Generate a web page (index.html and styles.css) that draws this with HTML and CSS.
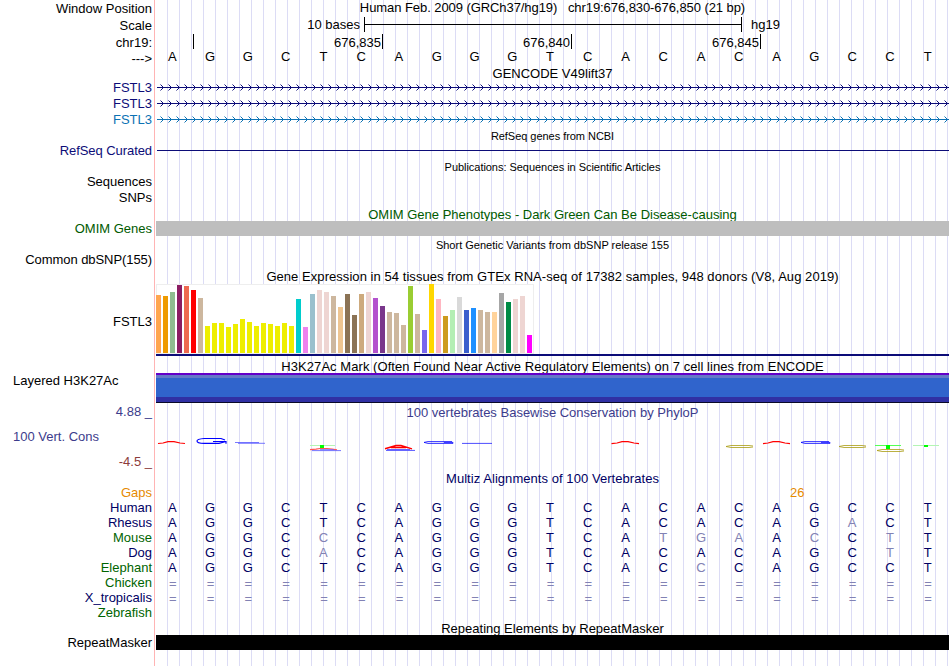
FILE: index.html
```
<!DOCTYPE html>
<html>

<head>
    <meta charset="utf-8" />
    <title>chr19:676,830-676,850</title>
    <link rel="stylesheet" href="styles.css">
</head>

<body>
    <div class="tracks">
        <div class="row header">
            <div class="label low">Window Position</div>
            <div class="data title tight">Human Feb. 2009 (GRCh37/hg19) &nbsp; chr19:676,830-676,850 (21 bp)</div>
        </div>
        <div class="row scale">
            <div class="label low">Scale</div>
            <div class="data">
                <span class="scale-text">10 bases</span>
                <span class="scale-bar"></span>
                <span>hg19</span>
            </div>
        </div>
        <div class="row ruler">
            <div class="label low">chr19:</div>
            <div class="data">
                <span class="tick first"></span>
                <span class="tick">676,835</span>
                <span class="tick">676,840</span>
                <span class="tick">676,845</span>
            </div>
        </div>
        <div class="row strand">
            <div class="label">---&gt;</div>
            <div class="data bases" data-seq="AGGCTCAGGGTCACACAGCCT"></div>
        </div>

        <div class="row title-row"><div class="data title">GENCODE V49lift37</div></div>
        <div class="row gene"><div class="label">FSTL3</div><div class="data arrows"></div></div>
        <div class="row gene"><div class="label">FSTL3</div><div class="data arrows"></div></div>
        <div class="row gene light"><div class="label">FSTL3</div><div class="data arrows"></div></div>

        <div class="row title-row small"><div class="data title tight">RefSeq genes from NCBI</div></div>
        <div class="row refseq"><div class="label tight">RefSeq Curated</div><div class="data"><div class="line"></div></div></div>

        <div class="row title-row small tall"><div class="data title tight">Publications: Sequences in Scientific Articles</div></div>
        <div class="row pub"><div class="label">Sequences</div></div>
        <div class="row pub"><div class="label">SNPs</div></div>

        <div class="row title-row omim"><div class="data title">OMIM Gene Phenotypes - Dark Green Can Be Disease-causing</div></div>
        <div class="row omim"><div class="label">OMIM Genes</div><div class="data gray-bar"></div></div>

        <div class="row title-row small tall"><div class="data title">Short Genetic Variants from dbSNP release 155</div></div>
        <div class="row pub"><div class="label tight">Common dbSNP(155)</div></div>

        <div class="row title-row tall"><div class="data title wide">Gene Expression in 54 tissues from GTEx RNA-seq of 17382 samples, 948 donors (V8, Aug 2019)</div></div>
        <div class="row gtex">
            <div class="label">FSTL3</div>
            <div class="data">
                <div class="chart" id="gtex"></div>
                <div class="gene-model"></div>
            </div>
        </div>

        <div class="row title-row"><div class="data title wide">H3K27Ac Mark (Often Found Near Active Regulatory Elements) on 7 cell lines from ENCODE</div></div>
        <div class="row h3k">
            <div class="label left">Layered H3K27Ac</div>
            <div class="data">
                <div class="h3k-top"></div>
                <div class="h3k-light"></div>
                <div class="h3k-main"></div>
                <div class="h3k-dark"></div>
                <div class="h3k-base"></div>
            </div>
        </div>

        <div class="row phylop">
            <div class="label-group">
                <div class="label limit">4.88 _</div>
                <div class="label left">100 Vert. Cons</div>
                <div class="label limit min">-4.5 _</div>
            </div>
            <div class="data">
                <div class="title">100 vertebrates Basewise Conservation by PhyloP</div>
                <svg class="logo" width="793" height="20" viewBox="156 435 793 20" fill="none">
                    <g stroke="#f00" stroke-width="1.2">
                        <path d="M158 443.5L163 443L168 441.6H174L180 443L185 443.5" />
                        <path d="M310 449.7L316 449.2L320 448.5H327L332 449.2L337 449.8" stroke="#f55" />
                        <path d="M385 448.7L396 445.6H401L412 448.9M391 447.4H406" stroke-width="1.5" />
                        <path d="M611.5 443.6L617 443L622 441.7H628L634 443L639 443.6" />
                        <path d="M763 443.6L768 443L773 441.7H779L785 443L790 443.6" />
                    </g>
                    <g stroke="#00f">
                        <path d="M225 440L221 438.5H204Q197 439 197 441Q197 443.4 204 443.4H219L226 441.5H213M226 441V443.8" stroke-width="1.2" />
                        <path d="M235 442.5H259M238 443.3H265" stroke-width=".8" stroke="#55f" />
                        <path d="M312 450.6H341M320 449.7H334" stroke-width=".9" stroke="#66f" />
                        <path d="M386 450.4H415M387 449.6H410" stroke-width="1" stroke="#55f" />
                        <path d="M452 441.6H428L424 442.4L428 443.4H453V442.4H444" stroke-width=".8" />
                        <path d="M462 443.4H492" stroke-width=".7" />
                        <path d="M829 441.6H805L801 442.4L805 443.4H830V442.4H821" stroke-width=".8" />
                    </g>
                    <g stroke="#aa9c12" stroke-width=".8">
                        <path d="M753 446L749 445.5H731L726 446.5L731 447.5H749L753 447" />
                        <path d="M866 446L862 445.5H844L839 446.5L844 447.5H862L866 447" />
                        <path d="M904 450L900 449.5H882L877 450.5L882 451.5H900L904 451" />
                    </g>
                    <g fill="#0f0">
                        <path d="M310 445H335V446H310zM913 445H939V446H913z" fill="#b4f5b4" />
                        <path d="M875 445H901V446H875z" fill="#5f5" />
                        <path d="M320 445H324V448H320zM886 445H890V449H886zM924 445H928V447H924z" />
                    </g>
                </svg>
            </div>
        </div>

        <div class="row title-row multiz"><div class="data title wide">Multiz Alignments of 100 Vertebrates</div></div>
        <div class="row align gaps"><div class="label">Gaps</div><div class="data">26</div></div>
        <div class="row align"><div class="label">Human</div><div class="data bases" data-seq="AGGCTCAGGGTCACACAGCCT"></div></div>
        <div class="row align"><div class="label">Rhesus</div><div class="data bases" data-seq="AGGCTCAGGGTCACACAGaCT"></div></div>
        <div class="row align green"><div class="label">Mouse</div><div class="data bases" data-seq="AGGCcCAGGGTCAtgaAcCtT"></div></div>
        <div class="row align"><div class="label">Dog</div><div class="data bases" data-seq="AGGCaCAGGGTCACACAGCtT"></div></div>
        <div class="row align green"><div class="label">Elephant</div><div class="data bases" data-seq="AGGCTCAGGGTCACcCAGCCT"></div></div>
        <div class="row align green"><div class="label">Chicken</div><div class="data bases" data-seq="====================="></div></div>
        <div class="row align"><div class="label">X_tropicalis</div><div class="data bases" data-seq="====================="></div></div>
        <div class="row align green"><div class="label">Zebrafish</div></div>

        <div class="row title-row"><div class="data title">Repeating Elements by RepeatMasker</div></div>
        <div class="row rmsk"><div class="label">RepeatMasker</div><div class="data black-bar"></div></div>
    </div>

    <script>
        // lower case = differs from the human base
        document.querySelectorAll(".bases").forEach(function (el) {
            el.dataset.seq.split("").forEach(function (c) {
                var s = document.createElement("span");
                s.innerText = c.toUpperCase();
                if (c == "=") {
                    s.className = "faded gap";
                } else if (c != c.toUpperCase()) {
                    s.className = "faded";
                }
                el.appendChild(s);
            });
        });

        // intron line with strand arrows every 8px
        var d = "";
        for (var x = 4.5; x < 793; x += 8) {
            d += "M" + x + " 4.5l3 3l-3 3";
        }
        document.querySelectorAll(".arrows").forEach(function (el) {
            el.innerHTML = '<svg width="793" height="16" fill="none" stroke="currentColor">' +
                '<path d="M1 7.5H793" /><path d="' + d + '" /></svg>';
        });

        // [color, height] for each tissue
        var tissues = [
            ["#ffa54f", 58], ["#ee9a00", 57], ["#8fbc8f", 61], ["#8b1c62", 68], ["#ee6a50", 67], ["#ff0000", 63], ["#cdb79e", 55],
            ["#eeee00", 27], ["#eeee00", 30], ["#eeee00", 30], ["#eeee00", 26], ["#eeee00", 29], ["#eeee00", 34], ["#eeee00", 31],
            ["#eeee00", 27], ["#eeee00", 30], ["#eeee00", 29], ["#eeee00", 27], ["#eeee00", 30], ["#eeee00", 27],
            ["#00cdcd", 54], ["#ee82ee", 26], ["#9ac0cd", 59], ["#eed5d2", 63], ["#eed5d2", 61], ["#cdb79e", 57], ["#eec591", 46],
            ["#8b7355", 59], ["#8b7355", 38], ["#cdaa7d", 59], ["#eed5d2", 61], ["#b452cd", 55], ["#7a378b", 47], ["#cdb79e", 41],
            ["#cdb79e", 40], ["#cdb79e", 28], ["#9acd32", 67], ["#cdb79e", 39], ["#7a67ee", 23], ["#ffd700", 69], ["#ffb6c1", 54],
            ["#cd9b1d", 37], ["#b4eeb4", 43], ["#d9d9d9", 56], ["#3a5fcd", 43], ["#1e90ff", 45], ["#cdb79e", 43], ["#cdb79e", 41],
            ["#ffd39b", 41], ["#a6a6a6", 60], ["#008b45", 51], ["#eed5d2", 54], ["#eed5d2", 57], ["#ff00ff", 18]
        ];
        tissues.forEach(function (t) {
            var bar = document.createElement("div");
            bar.className = "bar";
            bar.style.background = t[0];
            bar.style.height = t[1] + "px";
            document.getElementById("gtex").appendChild(bar);
        });
    </script>
</body>

</html>
```
FILE: styles.css
```
body {
    margin: 0;
    overflow: hidden;
    background: #fff;
    color: #000;
    font-family: "Liberation Sans", Arial, Helvetica, sans-serif;
    font-size: 13px;
    line-height: 15px;
}

.tracks {
    width: 949px;
    height: 666px;
    /* red edge of the label area, then the blue guidelines */
    background:
        linear-gradient(#ffb4b4, #ffb4b4) 154px 0 / 1px 100% no-repeat,
        repeating-linear-gradient(90deg, #dcdcf5 0 1px, transparent 1px 12px) 167px 0 / 782px 100% no-repeat;
}

.row {
    display: grid;
    grid-template-columns: 152px 793px;
    column-gap: 4px;
    height: 15px;
    white-space: nowrap;
}

.label {
    text-align: right;
}

.label.low {
    padding-top: 1px;
}

.label.left {
    padding-left: 13px;
    text-align: left;
}

.data {
    grid-column: 2;
    min-width: 0;
}

.title {
    text-align: center;
}

.tight {
    letter-spacing: -0.07px;
}

.small .tight {
    letter-spacing: -0.04px;
}

.wide {
    letter-spacing: 0.055px;
}

.header,
.scale {
    height: 17px;
}

.scale .data {
    display: flex;
}

.scale-text {
    width: 208px;
    padding-right: 4px;
    box-sizing: border-box;
    text-align: right;
}

.scale-bar {
    width: 376px;
    height: 15px;
    margin-right: 9px;
    border-left: 1px solid #000;
    border-right: 1px solid #000;
    background: linear-gradient(#000, #000) 0 7px / 100% 1px no-repeat;
}

.ruler .data {
    display: flex;
}

.tick {
    width: 189px;
    height: 15px;
    padding: 1px 1px 0 0;
    box-sizing: border-box;
    border-right: 1px solid #000;
    text-align: right;
}

.tick.first {
    width: 38px;
}

.strand {
    height: 16px;
}

.strand .label {
    padding-top: 2px;
}

.bases {
    display: grid;
    grid-template-columns: repeat(21, 1fr);
    margin-left: -2.5px;
    margin-right: 2.5px;
    text-align: center;
}

.title-row .title {
    padding-top: 1px;
}

.title-row.tall {
    height: 16px;
}

.small {
    font-size: 11px;
}

.small.tall .title {
    padding-top: 2px;
    line-height: 14px;
}

.gene,
.pub {
    height: 16px;
}

.gene,
.refseq {
    color: #0c0c78;
}

.gene.light {
    color: #0c72b4;
}

.arrows svg {
    display: block;
}

.line {
    height: 1px;
    margin: 7px 0 0 1px;
    background: #0c0c78;
}

.omim {
    color: #005a00;
}

.gray-bar {
    background: #bebebe;
}

.gtex {
    height: 74px;
}

.gtex .label {
    padding-top: 30px;
}

.chart {
    display: flex;
    align-items: flex-end;
    gap: 2px;
    width: 378px;
    height: 70px;
    padding-bottom: 1px;
    box-sizing: border-box;
    background: linear-gradient(#ddd, #ddd) 0 69px / 100% 1px no-repeat, #fff;
    box-shadow: inset 0 0 0 1px #eee;
}

.bar {
    width: 5px;
}

.gene-model {
    height: 2px;
    background: #0c0c78;
}

.h3k {
    height: 31px;
}

.h3k-top {
    height: 2px;
    background: #6400c8;
}

.h3k-light {
    height: 3px;
    background: #6478c8;
}

.h3k-main {
    height: 19px;
    background: #3064cc;
}

.h3k-dark {
    height: 5px;
    background: #3030a4;
}

.h3k-base {
    height: 1px;
    background: #0a0a28;
}

.phylop {
    height: 67px;
    color: #3c3c8c;
}

.label-group {
    display: flex;
    flex-direction: column;
    gap: 10px;
}

.phylop .title {
    padding-top: 1px;
}

.min {
    color: #8c3c3c;
}

.logo {
    display: block;
    margin-top: 15px;
}

.multiz,
.align {
    color: #000064;
}

.title-row.multiz {
    height: 14px;
}

.title-row.multiz .title {
    padding-top: 0;
}

.green .label {
    color: #006400;
}

.gaps {
    color: #e68a00;
}

.gaps .data {
    padding-left: 634px;
}

.faded {
    color: #8282b4;
}

.gap {
    padding: 1px 0 0 1px;
}

.black-bar {
    background: #000;
}
```
